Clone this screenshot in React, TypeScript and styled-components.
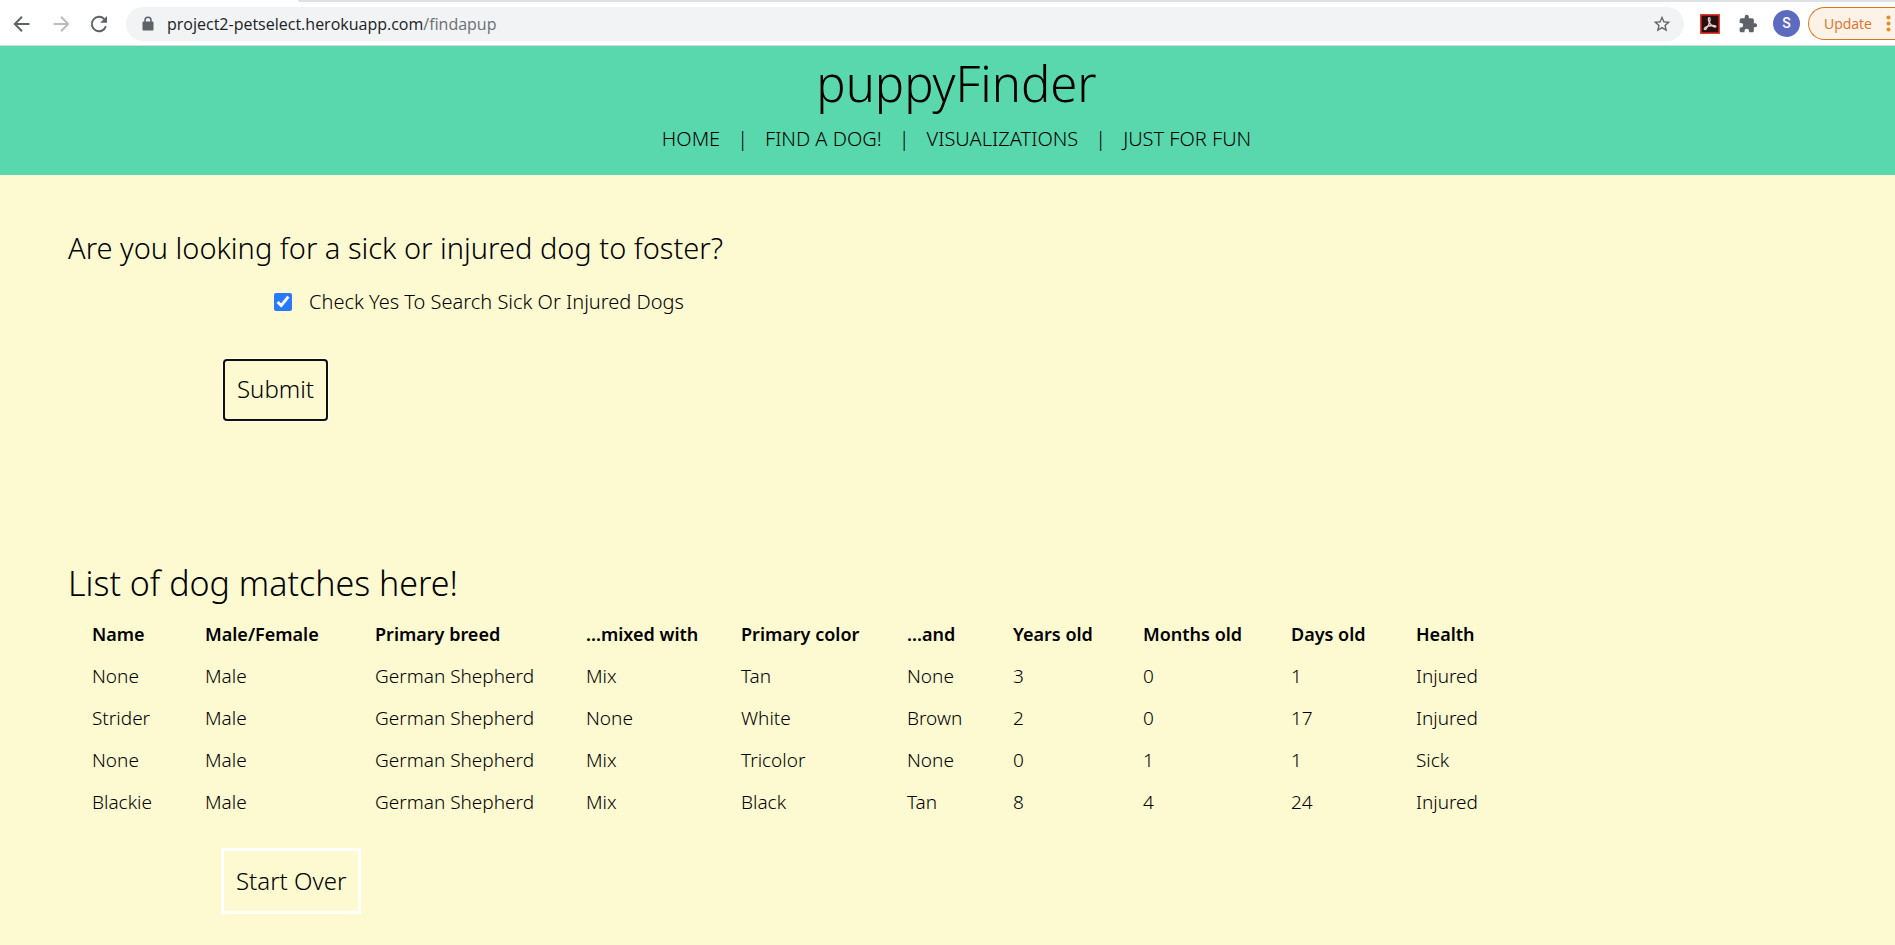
import React from 'react';
import styled, { createGlobalStyle } from 'styled-components';

const GlobalStyle = createGlobalStyle`
  * { box-sizing: border-box; }
  body {
    margin: 0;
    background: #fdf9d0;
    color: #000;
    font-family: 'Noto Sans', 'Open Sans', sans-serif;
    font-weight: 300;
    overflow-x: hidden;
  }
`;

const BrowserBar = styled.div`
  display: flex;
  align-items: center;
  height: 46px;
  padding: 2px 0 0 12px;
  background: #fff;
  border-bottom: 1px solid #d5d8da;
`;

const TabStrip = styled.div`
  position: absolute;
  top: 0;
  left: 298px;
  right: 0;
  height: 2px;
  background: #dee1e6;
  border-bottom-left-radius: 4px;
`;

const ToolButton = styled.button<{ $gap: number; $faded?: boolean }>`
  display: flex;
  flex: none;
  width: 20px;
  height: 20px;
  margin-right: ${(p) => p.$gap}px;
  padding: 0;
  border: 0;
  background: none;
  color: ${(p) => (p.$faded ? '#babcbe' : '#5f6368')};
`;

const AddressBar = styled.div`
  display: flex;
  flex: 1;
  align-items: center;
  height: 34px;
  margin-right: 16px;
  padding: 0 12px 0 14px;
  border-radius: 17px;
  background: #f1f3f4;
  color: #5f6368;
`;

const Address = styled.div`
  flex: 1;
  margin-left: 11px;
  color: #6b6f73;
  font-family: 'Open Sans', sans-serif;
  font-size: 16px;
  line-height: 24px;
  font-weight: 400;
`;

const Host = styled.span`
  color: #202124;
`;

const Avatar = styled.button`
  flex: none;
  width: 27px;
  height: 27px;
  margin-right: 8px;
  padding: 0;
  border: 0;
  border-radius: 50%;
  background: #5c6bc0;
  color: #fff;
  font: 500 14px/27px Roboto, sans-serif;
`;

const UpdateButton = styled.button`
  display: flex;
  align-items: center;
  justify-content: space-between;
  flex: none;
  width: 87px;
  height: 33px;
  padding: 0 4px 0 15px;
  border: 1px solid #e0761c;
  border-right: 0;
  border-radius: 17px 0 0 17px;
  background: #fdf2e8;
  color: #dd7324;
  font: 400 14px/20px 'Open Sans', sans-serif;
`;

const SiteHeader = styled.header`
  display: flex;
  flex-direction: column;
  align-items: center;
  padding: 7px 0 22px 18px;
  background: #59d8ad;
`;

const SiteTitle = styled.h1`
  margin: 0 0 12px;
  font-size: 49px;
  line-height: 60px;
  font-weight: 300;
`;

const Nav = styled.nav`
  display: flex;
  gap: 17px;
  font-size: 20px;
  line-height: 28px;
`;

const NavLink = styled.a`
  color: inherit;
  text-decoration: none;
`;

const Main = styled.main`
  display: flex;
  flex-direction: column;
  align-items: flex-start;
  padding: 53px 68px 30px;
`;

const SearchForm = styled.form`
  margin-bottom: 138px;
`;

const Question = styled.h2`
  margin: 0 0 20px;
  font-size: 29px;
  line-height: 40px;
  font-weight: 300;
`;

const CheckRow = styled.div`
  display: flex;
  align-items: center;
  gap: 17px;
  margin: 0 0 43px 206px;
  font-size: 20px;
  line-height: 28px;
`;

const CheckBox = styled.input`
  width: 18px;
  height: 18px;
  margin: 0;
  accent-color: #2979ff;
`;

const Button = styled.button`
  display: block;
  margin-left: 153px;
  padding: 12px;
  border: 3px solid #fff;
  background: transparent;
  color: #000;
  font: inherit;
  font-size: 24px;
  line-height: 36px;
`;

const SubmitButton = styled(Button)`
  margin-left: 155px;
  padding: 10px 12px 12px;
  border: 2px solid #101010;
  border-radius: 4px;
  box-shadow: 0 0 0 1px #fff;
`;

const ListTitle = styled.h2`
  margin: 0 0 6px;
  font-size: 34px;
  line-height: 48px;
  font-weight: 300;
`;

const DogTable = styled.table`
  margin-bottom: 25px;
  border-collapse: collapse;
  table-layout: fixed;
  width: 1409px;
  font-size: 19px;
  line-height: 26px;
  text-align: left;
`;

const Column = styled.col<{ $width: number }>`
  width: ${(p) => p.$width}px;
`;

const HeadCell = styled.th`
  padding: 8px 0 8px 24px;
  font-size: 18px;
  font-weight: 600;
  white-space: nowrap;
`;

const Cell = styled.td`
  padding: 8px 0 8px 24px;
  white-space: nowrap;
`;

const columns: [string, number][] = [
  ['Name', 113],
  ['Male/Female', 170],
  ['Primary breed', 211],
  ['...mixed with', 155],
  ['Primary color', 166],
  ['...and', 106],
  ['Years old', 130],
  ['Months old', 148],
  ['Days old', 125],
  ['Health', 85],
];

const dogs = [
  ['None', 'Male', 'German Shepherd', 'Mix', 'Tan', 'None', '3', '0', '1', 'Injured'],
  ['Strider', 'Male', 'German Shepherd', 'None', 'White', 'Brown', '2', '0', '17', 'Injured'],
  ['None', 'Male', 'German Shepherd', 'Mix', 'Tricolor', 'None', '0', '1', '1', 'Sick'],
  ['Blackie', 'Male', 'German Shepherd', 'Mix', 'Black', 'Tan', '8', '4', '24', 'Injured'],
];

const links = ['HOME', 'FIND A DOG!', 'VISUALIZATIONS', 'JUST FOR FUN'];

const ArrowIcon = ({ forward }: { forward?: boolean }) => (
  <svg width="20" height="20" viewBox="0 0 20 20" fill="none" stroke="currentColor" strokeWidth="2">
    {forward ? <path d="M2.5 10H17M10 2.8 17.2 10 10 17.2" /> : <path d="M17.5 10H3M10 2.8 2.8 10l7.2 7.2" />}
  </svg>
);

const ReloadIcon = () => (
  <svg width="20" height="20" viewBox="0 0 20 20">
    <path d="M16.9 12.3A7.2 7.2 0 1 1 15.2 5" fill="none" stroke="currentColor" strokeWidth="2" />
    <path d="M18 2v6.8h-6.8z" fill="currentColor" />
  </svg>
);

const LockIcon = () => (
  <svg width="16" height="16" viewBox="0 0 16 16">
    <rect x="2.5" y="5.5" width="11" height="9" rx="1" fill="currentColor" />
    <path d="M5 6V4.3a3 3 0 0 1 6 0V6" fill="none" stroke="currentColor" strokeWidth="1.5" />
  </svg>
);

const StarIcon = () => (
  <svg width="20" height="20" viewBox="0 0 24 24" fill="currentColor">
    <path d="m22 9.24-7.19-.62L12 2 9.19 8.63 2 9.24l5.46 4.73L5.82 21 12 17.27 18.18 21l-1.63-7.03L22 9.24zM12 15.4l-3.76 2.27 1-4.28-3.32-2.88 4.38-.38L12 6.1l1.71 4.04 4.38.38-3.32 2.88 1 4.28L12 15.4z" />
  </svg>
);

const AcrobatIcon = () => (
  <svg width="20" height="20" viewBox="0 0 20 20">
    <rect x=".75" y=".75" width="18.5" height="18.5" fill="#2b0f0f" stroke="#f03a2e" strokeWidth="1.5" />
    <path
      d="M9.3 3.7c1.2 0 .9 2.2.3 4.3-.7 2.5-2.2 5.5-3.5 7-.9 1-2.3.5-1.6-.6.8-1.2 4-2.5 7.2-2.9 2.3-.3 4.3.1 4.2 1-.2 1.2-2.7.4-4.2-.9C10 10.1 8.400 7.500 8.300 5.400c0-1 .3-1.700 1-1.700z"
      fill="none"
      stroke="#dcd0d0"
      strokeWidth="1.3"
    />
  </svg>
);

const PuzzleIcon = () => (
  <svg width="20" height="20" viewBox="0 0 24 24" fill="currentColor">
    <path d="M20.5 11H19V7c0-1.100-.9-2-2-2h-4V3.500a2.500 2.500 0 0 0-5 0V5H4c-1.100 0-2 .9-2 2v3.800h1.500a2.700 2.700 0 0 1 0 5.400H2V20c0 1.100.9 2 2 2h3.800v-1.500a2.700 2.700 0 0 1 5.400 0V22H17c1.100 0 2-.9 2-2v-4h1.500a2.500 2.500 0 0 0 0-5z" />
  </svg>
);

const DotsIcon = () => (
  <svg width="5" height="17" viewBox="0 0 5 17" fill="#ee8a1d">
    <circle cx="2.5" cy="2.5" r="2" />
    <circle cx="2.5" cy="8.5" r="2" />
    <circle cx="2.5" cy="14.5" r="2" />
  </svg>
);

export default function App() {
  return (
    <>
      <GlobalStyle />
      <BrowserBar>
        <TabStrip />
        <ToolButton $gap={19} aria-label="Back"><ArrowIcon /></ToolButton>
        <ToolButton $gap={18} $faded aria-label="Forward"><ArrowIcon forward /></ToolButton>
        <ToolButton $gap={17} aria-label="Reload"><ReloadIcon /></ToolButton>
        <AddressBar>
          <LockIcon />
          <Address><Host>project2-petselect.herokuapp.com</Host>/findapup</Address>
          <ToolButton $gap={0} aria-label="Bookmark"><StarIcon /></ToolButton>
        </AddressBar>
        <ToolButton $gap={18} aria-label="Acrobat"><AcrobatIcon /></ToolButton>
        <ToolButton $gap={15} aria-label="Extensions"><PuzzleIcon /></ToolButton>
        <Avatar>S</Avatar>
        <UpdateButton>Update<DotsIcon /></UpdateButton>
      </BrowserBar>
      <SiteHeader>
        <SiteTitle>puppyFinder</SiteTitle>
        <Nav>
          {links.map((label, i) => (
            <React.Fragment key={label}>
              {i > 0 && <span>|</span>}
              <NavLink href="#">{label}</NavLink>
            </React.Fragment>
          ))}
        </Nav>
      </SiteHeader>
      <Main>
        <SearchForm onSubmit={(e) => e.preventDefault()}>
          <Question>Are you looking for a sick or injured dog to foster?</Question>
          <CheckRow>
            <CheckBox id="sick" type="checkbox" defaultChecked />
            <label htmlFor="sick">Check Yes To Search Sick Or Injured Dogs</label>
          </CheckRow>
          <SubmitButton type="submit">Submit</SubmitButton>
        </SearchForm>
        <ListTitle>List of dog matches here!</ListTitle>
        <DogTable>
          <colgroup>
            {columns.map(([name, width]) => <Column key={name} $width={width} />)}
          </colgroup>
          <thead>
            <tr>{columns.map(([name]) => <HeadCell key={name} scope="col">{name}</HeadCell>)}</tr>
          </thead>
          <tbody>
            {dogs.map((dog, row) => (
              <tr key={row}>{dog.map((value, i) => <Cell key={i}>{value}</Cell>)}</tr>
            ))}
          </tbody>
        </DogTable>
        <Button type="button">Start Over</Button>
      </Main>
    </>
  );
}
